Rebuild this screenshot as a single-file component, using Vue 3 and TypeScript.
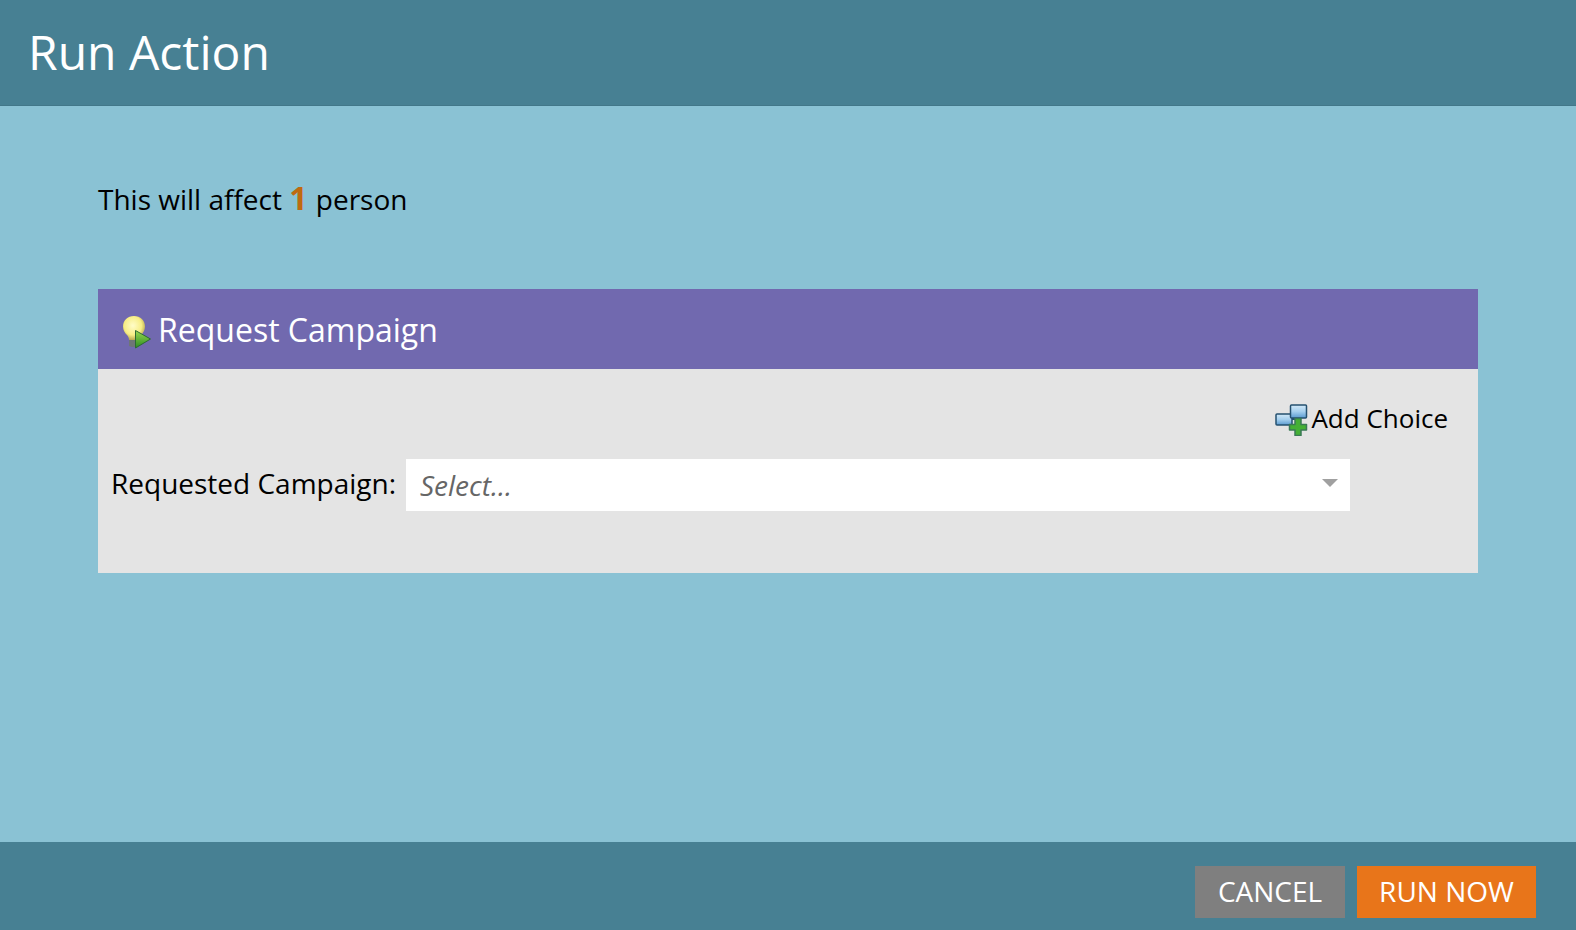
<script setup lang="ts">
const title: string = 'Run Action'
</script>

<template>
  <div class="dialog">
    <header class="top">{{ title }}</header>
    <main class="content">
      <p class="affect">This will affect <b>1</b> person</p>
      <section class="panel">
        <div class="panel-head">
          <svg class="bulb" width="32" height="36" viewBox="0 0 32 36">
            <defs>
              <radialGradient id="bulbFill" cx="45%" cy="40%" r="60%">
                <stop offset="0" stop-color="#fffcc8" />
                <stop offset="0.65" stop-color="#f7ee86" />
                <stop offset="1" stop-color="#b8a850" />
              </radialGradient>
              <linearGradient id="playFill" x1="0" y1="0" x2="0" y2="1">
                <stop offset="0" stop-color="#9ad84f" />
                <stop offset="1" stop-color="#2b8d22" />
              </linearGradient>
            </defs>
            <path d="M8 26h8v7q-4 2-8 0z" fill="#6e7676" />
            <path d="M13 3C6.500 3 2 7.500 2 13.500c0 4 2 6.500 4 8.500 1.200 1.200 2 3 2 5h10c0-2 .8-3.800 2-5 2-2 4-4.500 4-8.500C24 7.500 19.500 3 13 3z" fill="url(#bulbFill)" />
            <path d="M14.500 17.500l15 8.500-15 9z" fill="url(#playFill)" stroke="#2c6b32" stroke-width="1" stroke-linejoin="round" />
          </svg>
          <span>Request Campaign</span>
        </div>
        <div class="panel-body">
          <div class="add-row">
            <svg class="choice" width="33" height="32" viewBox="0 0 33 32">
              <defs>
                <linearGradient id="paneFill" x1="0" y1="0" x2="0" y2="1">
                  <stop offset="0" stop-color="#d3e9f8" />
                  <stop offset="0.5" stop-color="#a4cfee" />
                  <stop offset="1" stop-color="#5a9ad0" />
                </linearGradient>
              </defs>
              <rect x="1" y="10" width="16" height="11" rx="1" fill="url(#paneFill)" stroke="#24506f" stroke-width="1.500" />
              <path d="M17 15h3" stroke="#24506f" stroke-width="2" />
              <rect x="15.500" y="1" width="16" height="13" rx="1" fill="url(#paneFill)" stroke="#24506f" stroke-width="1.500" />
              <path d="M20 14.500h6v6h5.500v5.500h-5.500v5.500h-6v-5.500h-5.500v-5.500h5.500z" fill="#45b035" stroke="#3a7a55" stroke-width="1.500" stroke-linejoin="round" />
            </svg>
            <span>Add Choice</span>
          </div>
          <div class="field">
            <label class="field-label">Requested Campaign:</label>
            <div class="select">
              <span>Select...</span>
              <i class="caret"></i>
            </div>
          </div>
        </div>
      </section>
    </main>
    <footer class="bottom">
      <button class="btn cancel">CANCEL</button>
      <button class="btn run">RUN NOW</button>
    </footer>
  </div>
</template>

<style>
html, body { margin: 0; padding: 0; }
</style>

<style scoped>
.dialog {
  width: 1576px;
  height: 930px;
  display: flex;
  flex-direction: column;
  background: #8ac2d4;
  font-family: "Open Sans", "Noto Sans", sans-serif;
  overflow: hidden;
}
.top {
  height: 106px;
  box-sizing: border-box;
  background: #478093;
  color: #fff;
  font-size: 48px;
  line-height: 104px;
  padding-left: 28px;
  border-bottom: 1px solid #427789;
}
.content {
  flex: 1;
  padding: 0 98px;
}
.affect {
  margin: 0;
  padding-top: 74px;
  height: 109px;
  font-size: 28px;
  line-height: 36px;
  color: #000;
}
.affect b {
  color: #bf6a10;
  font-weight: 700;
  font-size: 32px;
  margin-right: 1px;
}
.panel {
  background: #e4e4e4;
  height: 284px;
}
.panel-head {
  height: 80px;
  background: #7169af;
  color: #fff;
  font-size: 32px;
  display: flex;
  align-items: center;
  padding-left: 23px;
  gap: 5px;
}
.bulb {
  margin-top: 4px;
}
.panel-body {
  padding: 33px 30px 0 13px;
}
.add-row {
  display: flex;
  justify-content: flex-end;
  align-items: center;
  height: 32px;
  font-size: 26px;
  color: #000;
}
.choice {
  align-self: flex-start;
  margin: 2px 3px 0 0;
}
.field {
  display: flex;
  align-items: center;
  margin-top: 25px;
  font-size: 28px;
  color: #000;
}
.field-label {
  width: 295px;
  position: relative;
  top: -2px;
}
.select {
  width: 944px;
  height: 52px;
  background: #fff;
  position: relative;
  display: flex;
  align-items: center;
  padding-left: 14px;
  box-sizing: border-box;
  font-style: italic;
  color: #666;
}
.caret {
  position: absolute;
  right: 12px;
  top: 20px;
  border-left: 8px solid transparent;
  border-right: 8px solid transparent;
  border-top: 8px solid #a0a0a0;
}
.bottom {
  height: 88px;
  box-sizing: border-box;
  background: #478093;
  display: flex;
  justify-content: flex-end;
  align-items: flex-start;
  padding: 24px 40px 0 0;
  gap: 12px;
}
.btn {
  height: 52px;
  border: none;
  color: #fff;
  font-family: inherit;
  font-size: 28px;
  padding: 0 0 2px;
}
.cancel { width: 150px; background: #7f7f7f; }
.run { width: 179px; background: #e8751a; }
</style>
